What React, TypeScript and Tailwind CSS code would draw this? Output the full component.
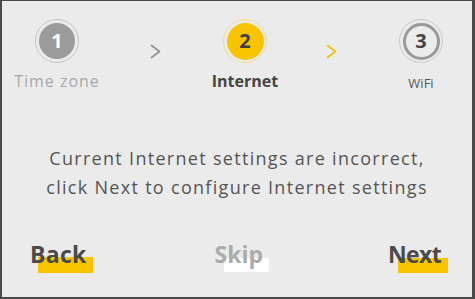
const Chevron = ({ color }: { color: string }) => (
  <svg width="11" height="15" viewBox="0 0 11 15" fill="none">
    <polyline points="1.5,1.5 9.5,7.5 1.5,13.5" stroke={color} strokeWidth="1.6" strokeLinecap="round" strokeLinejoin="round" />
  </svg>
);

const App = () => {
  return (
    <div
      className="w-[475px] h-[299px] bg-[#ebebeb] border-[#4a4a4a] border-t border-l-2 border-r-[3px] border-b-2 flex flex-col"
      style={{ fontFamily: '"Open Sans", "DejaVu Sans", sans-serif' }}
    >
      {/* Steps */}
      <div className="mt-[18px] pl-[10px] grid grid-cols-[90px_98px_90px_86px_90px]">
        <div className="flex flex-col items-center">
          <div className="w-[44px] h-[44px] rounded-full border-[1.5px] border-[#c6c6c6] flex items-center justify-center">
            <div className="w-[36px] h-[36px] rounded-full bg-[#9b9b9b] flex items-center justify-center text-white font-bold text-[20px] leading-none">
              1
            </div>
          </div>
          <div className="mt-[7px] text-[16px] leading-[22px] text-[#a8a8a8] tracking-[1px] whitespace-nowrap">Time zone</div>
        </div>

        <div className="pl-[48px] pt-[25px]">
          <Chevron color="#8f8f8f" />
        </div>

        <div className="flex flex-col items-center">
          <div className="w-[44px] h-[44px] rounded-full border-[1.5px] border-[#f3dc8e] flex items-center justify-center">
            <div className="w-[37px] h-[37px] rounded-full bg-[#f8c300] flex items-center justify-center text-[#3f3f3f] font-bold text-[20px] leading-none">
              2
            </div>
          </div>
          <div className="mt-[7px] text-[16px] leading-[22px] text-[#444] font-bold whitespace-nowrap">Internet</div>
        </div>

        <div className="pl-[36px] pt-[25px]">
          <Chevron color="#f5c000" />
        </div>

        <div className="flex flex-col items-center">
          <div className="w-[44px] h-[44px] rounded-full border-[1.5px] border-[#c9c9c9] flex items-center justify-center">
            <div className="w-[37px] h-[37px] rounded-full border-[3px] border-[#999] bg-[#ececec] flex items-center justify-center text-[#444] font-bold text-[20px] leading-none">
              3
            </div>
          </div>
          <div className="mt-[10px] text-[13px] leading-[20px] text-[#555] whitespace-nowrap">WiFi</div>
        </div>
      </div>

      {/* Message */}
      <div className="mt-[51px] text-center text-[18px] leading-[29px] tracking-[1.3px] text-[#555]">
        <p>Current Internet settings are incorrect,</p>
        <p>click Next to configure Internet settings</p>
      </div>

      {/* Buttons */}
      <div className="mt-[37px] pl-[28px] pr-[24px] flex justify-between items-start">
        <div className="relative w-[63px] h-[30px]">
          <span className="absolute left-[8px] top-[18px] w-[55px] h-[16px] bg-[#f8c300]" />
          <span className="relative text-[23px] leading-[30px] font-bold text-[#4a4a4a] tracking-[0.3px]">Back</span>
        </div>
        <div className="relative w-[54px] h-[30px]">
          <span className="absolute left-[9px] top-[19px] w-[45px] h-[14px] bg-white" />
          <span className="relative text-[23px] leading-[30px] font-bold text-[#ababab]">Skip</span>
        </div>
        <div className="relative w-[58px] h-[30px]">
          <span className="absolute left-[8px] top-[19px] w-[50px] h-[15px] bg-[#f8c300]" />
          <span className="relative -ml-[2px] text-[23px] leading-[30px] font-bold text-[#4a4a4a] tracking-[-0.6px]">Next</span>
        </div>
      </div>
    </div>
  );
};

export default App;
